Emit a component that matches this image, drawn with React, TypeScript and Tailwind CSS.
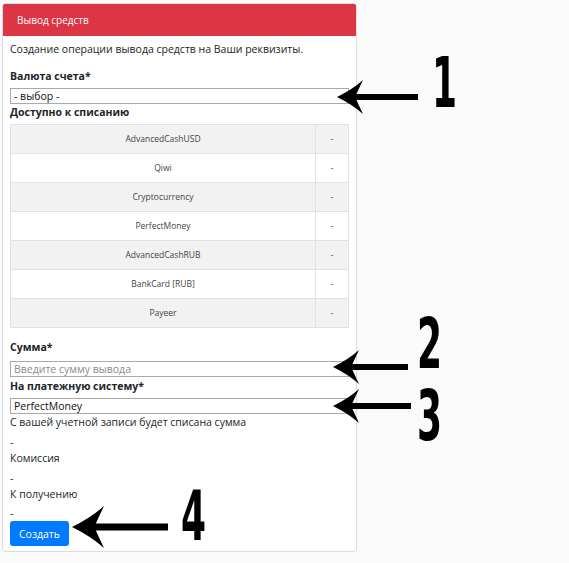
import React from 'react';

const rows = [
  'AdvancedCashUSD',
  'Qiwi',
  'Cryptocurrency',
  'PerfectMoney',
  'AdvancedCashRUB',
  'BankCard [RUB]',
  'Payeer',
];

// стрелка-указатель: острие слева, хвост справа
const Arrow = ({ x, y, len, head = 26, half = 17, thick = 6 }: { x: number; y: number; len: number; head?: number; half?: number; thick?: number }) => (
  <svg
    className="absolute"
    style={{ left: x, top: y - half }}
    width={len}
    height={half * 2}
    viewBox={`0 0 ${len} ${half * 2}`}
  >
    <rect x={head * 0.6} y={half - thick / 2} width={len - head * 0.6} height={thick} fill="#000" />
    <path
      d={`M0 ${half} Q ${head * 0.6} ${half * 0.55} ${head} 0 Q ${head * 0.75} ${half * 0.8} ${head * 0.7} ${half} Q ${head * 0.75} ${half * 1.2} ${head} ${half * 2} Q ${head * 0.6} ${half * 1.45} 0 ${half} Z`}
      fill="#000"
    />
  </svg>
);

const Digit = ({ x, y, children }: { x: number; y: number; children: React.ReactNode }) => (
  <div
    className="absolute origin-top-left scale-x-[0.72] scale-y-[1.4] text-[50px] leading-[36px] font-black text-black"
    style={{ left: x, top: y, fontFamily: '"DejaVu Sans", sans-serif' }}
  >
    {children}
  </div>
);

const Field = ({ children, muted }: { children: React.ReactNode; muted?: boolean }) => (
  <div className={`h-[16px] border border-[#a9a9a9] flex items-center pl-[3px] text-[10.5px] leading-none ${muted ? 'text-[#8a8a8a]' : 'text-[#111]'}`}>
    {children}
  </div>
);

export default function App() {
  return (
    <div className="relative w-[569px] h-[563px] bg-[#fafafa] overflow-hidden" style={{ fontFamily: '"Open Sans", sans-serif' }}>
      <div className="ml-[2px] pt-[3px] w-[355px]">
        <div className="bg-white border border-[#dcdcdc] rounded-[3px] overflow-hidden">
          {/* шапка */}
          <div className="h-[32px] bg-[#dc3545] flex items-center pl-[14px] text-[10px] text-white">Вывод средств</div>

          <div className="flex flex-col items-stretch px-[7px] pt-[5px] pb-[5px] text-[10.5px] leading-[16px] text-[#212529]">
            <p>Создание операции вывода средств на Ваши реквизиты.</p>

            <p className="mt-[11px] font-bold">Валюта счета*</p>
            <div className="mt-[4px]">
              <Field>- выбор -</Field>
            </div>
            <p className="font-bold">Доступно к списанию</p>

            <table className="mt-[4px] w-full border-collapse text-[8.5px] text-[#444]">
              <tbody>
                {rows.map((r, i) => (
                  <tr key={r} className={i % 2 === 0 ? 'bg-[#f2f2f2]' : 'bg-white'}>
                    <td className="h-[29px] border border-[#dee2e6] text-center">{r}</td>
                    <td className="h-[29px] w-[33px] border border-[#dee2e6] text-center">-</td>
                  </tr>
                ))}
              </tbody>
            </table>

            <p className="mt-[11px] font-bold">Сумма*</p>
            <div className="mt-[6px]">
              <Field muted>Введите сумму вывода</Field>
            </div>
            <p className="mt-[1px] font-bold">На платежную систему*</p>
            <div className="mt-[4px]">
              <Field>PerfectMoney</Field>
            </div>

            <p>С вашей учетной записи будет списана сумма</p>
            <p className="mt-[4px]">-</p>
            <p>Комиссия</p>
            <p className="mt-[4px]">-</p>
            <p>К получению</p>
            <p className="mt-[3px]">-</p>

            <div className="flex">
              <button className="h-[25px] px-[9px] rounded-[3px] bg-[#007bff] text-white text-[10.5px]">Создать</button>
            </div>
          </div>
        </div>
      </div>

      {/* пометки */}
      <Arrow x={337} y={97} len={81} />
      <Digit x={432} y={58}>1</Digit>
      <Arrow x={333} y={367} len={75} />
      <Digit x={417} y={319}>2</Digit>
      <Arrow x={333} y={406} len={78} />
      <Digit x={417} y={391}>3</Digit>
      <Arrow x={72} y={527} len={96} head={32} half={21} thick={7} />
      <Digit x={181} y={491}>4</Digit>
    </div>
  );
}
